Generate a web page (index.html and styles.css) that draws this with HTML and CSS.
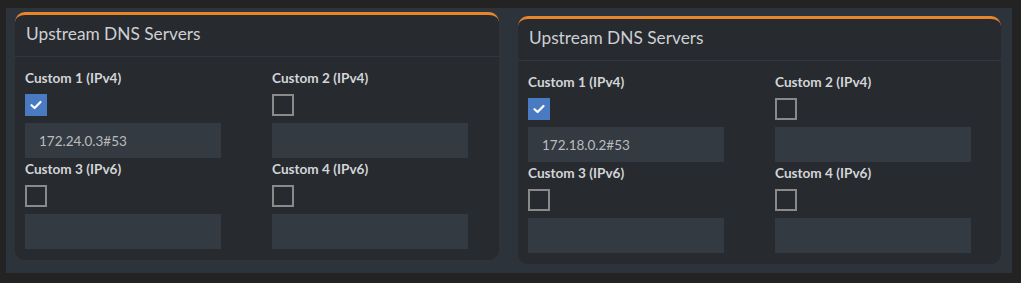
FILE: index.html
```html
<!DOCTYPE html>
<html lang="en">
<head>
    <meta charset="UTF-8">
    <title>Upstream DNS Servers</title>
    <link rel="stylesheet" href="styles.css">
</head>
<body>
    <div class="strip">
        <div class="panel panel-left">
            <div class="card">
                <div class="card-header">Upstream DNS Servers</div>
                <div class="card-body">
                    <div class="form-group">
                        <label>Custom 1 (IPv4)</label>
                        <div class="check checked">
                            <svg width="14" height="14" viewBox="0 0 14 14"><path d="M2.5 7.2 L5.6 10 L11.5 4" fill="none" stroke="#fff" stroke-width="2.2" stroke-linecap="round" stroke-linejoin="round"/></svg>
                        </div>
                        <input type="text" value="172.24.0.3#53">
                    </div>
                    <div class="form-group">
                        <label>Custom 2 (IPv4)</label>
                        <div class="check"></div>
                        <input type="text" value="">
                    </div>
                    <div class="form-group">
                        <label>Custom 3 (IPv6)</label>
                        <div class="check"></div>
                        <input type="text" value="">
                    </div>
                    <div class="form-group">
                        <label>Custom 4 (IPv6)</label>
                        <div class="check"></div>
                        <input type="text" value="">
                    </div>
                </div>
            </div>
        </div>
        <div class="panel panel-right">
            <div class="card">
                <div class="card-header">Upstream DNS Servers</div>
                <div class="card-body">
                    <div class="form-group">
                        <label>Custom 1 (IPv4)</label>
                        <div class="check checked">
                            <svg width="14" height="14" viewBox="0 0 14 14"><path d="M2.5 7.2 L5.6 10 L11.5 4" fill="none" stroke="#fff" stroke-width="2.2" stroke-linecap="round" stroke-linejoin="round"/></svg>
                        </div>
                        <input type="text" value="172.18.0.2#53">
                    </div>
                    <div class="form-group">
                        <label>Custom 2 (IPv4)</label>
                        <div class="check"></div>
                        <input type="text" value="">
                    </div>
                    <div class="form-group">
                        <label>Custom 3 (IPv6)</label>
                        <div class="check"></div>
                        <input type="text" value="">
                    </div>
                    <div class="form-group">
                        <label>Custom 4 (IPv6)</label>
                        <div class="check"></div>
                        <input type="text" value="">
                    </div>
                </div>
            </div>
        </div>
    </div>
</body>
</html>
```

FILE: styles.css
```css
body {
    margin: 0;
    background: #232323;
    font-family: 'Lato', 'Noto Sans', sans-serif;
}
.strip {
    display: flex;
    padding: 8px 0 0 6px;
}
.panel {
    background: #2c333b;
    box-sizing: border-box;
}
.panel-left {
    width: 506px;
    padding: 4px 13px 13px 9px;
}
.panel-right {
    width: 500px;
    padding: 8px 11px 9px 6px;
}
.card {
    background: #272a2f;
    border-top: 3px solid #e8852a;
    border-radius: 10px;
}
.card-header {
    height: 42px;
    box-sizing: border-box;
    padding: 6px 11px 0;
    font-size: 17.3px;
    line-height: 26px;
    color: #cdd0d3;
    border-bottom: 1px solid #31373e;
}
.card-body {
    display: grid;
    grid-template-columns: 196px 196px;
    column-gap: 51px;
    row-gap: 3px;
    padding: 13px 10px 11px;
}
label {
    display: block;
    height: 16px;
    line-height: 16px;
    margin-bottom: 8px;
    font-size: 13.6px;
    font-weight: 700;
    color: #d3d5d7;
}
.check {
    width: 22px;
    height: 22px;
    box-sizing: border-box;
    border: 2px solid #8a8a8a;
    margin-bottom: 7px;
    display: flex;
    align-items: center;
    justify-content: center;
}
.checked {
    background: #4a7bc2;
    border-color: #4a7bc2;
}
input[type="text"] {
    display: block;
    width: 196px;
    height: 35px;
    box-sizing: border-box;
    border: none;
    padding: 0 14px;
    background: #343a41;
    color: #b9bcbf;
    font-family: 'Lato', 'Noto Sans', sans-serif;
    font-size: 13.5px;
    outline: none;
}
```
